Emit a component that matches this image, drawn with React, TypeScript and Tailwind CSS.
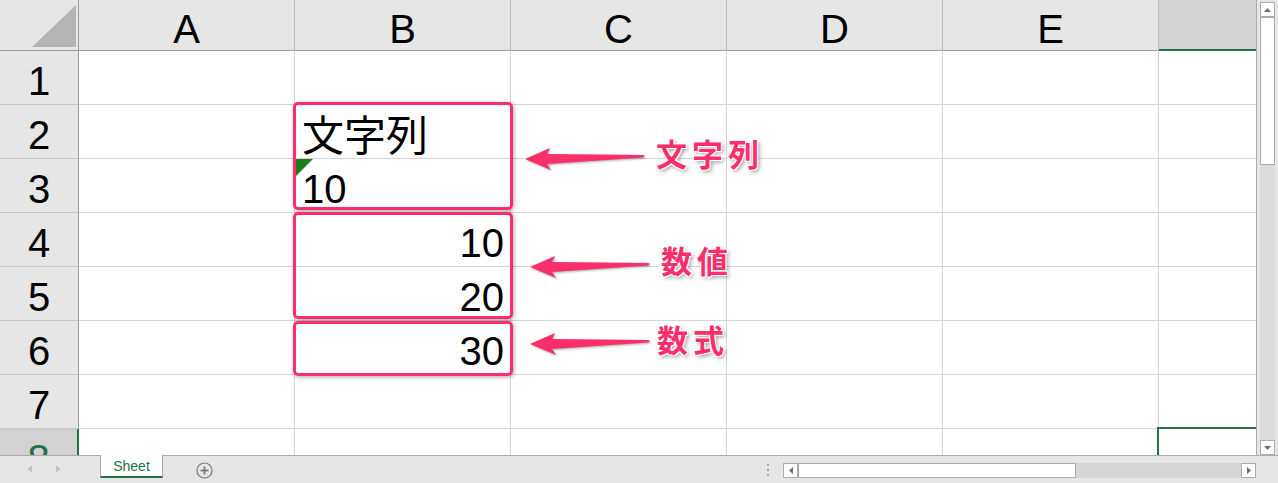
import React from 'react';

const COLS = ['A', 'B', 'C', 'D', 'E'];
const ROWS = [1, 2, 3, 4, 5, 6, 7, 8];
const PINK = '#fa2e6b';

const Arrow: React.FC<{ left: number; top: number }> = ({ left, top }) => (
  <svg
    className="absolute drop-shadow-[1px_1px_1px_rgba(0,0,0,0.35)]"
    style={{ left, top }}
    width="130"
    height="30"
    viewBox="0 0 130 30"
  >
    <polygon
      points="5,15 30,4 27,10 123,11 125,12 123,13.5 27,20 31,26"
      fill={PINK}
    />
  </svg>
);

const Label: React.FC<{ text: string; className: string }> = ({ text, className }) => (
  <div
    className={`absolute font-['Noto_Sans_CJK_JP',sans-serif] font-bold text-[31px] leading-none tracking-[5px] text-[#fa2e6b] [text-shadow:-1px_-1px_0_#fff,1px_-1px_0_#fff,-1px_1px_0_#fff,1px_1px_0_#fff,2px_2px_4px_rgba(0,0,0,0.45)] ${className}`}
  >
    {text}
  </div>
);

function cellContent(row: number, col: string) {
  if (col !== 'B') return null;
  if (row === 2)
    return (
      <span className="pl-[7px] pb-[4px] font-['Noto_Sans_CJK_JP',sans-serif] text-[42px] leading-none">
        文字列
      </span>
    );
  if (row === 3) return <span className="pl-[7px] pb-[3px]">10</span>;
  if (row === 4) return <span className="ml-auto pr-[6px] pb-[3px]">10</span>;
  if (row === 5) return <span className="ml-auto pr-[6px] pb-[3px]">20</span>;
  if (row === 6) return <span className="ml-auto pr-[6px] pb-[3px]">30</span>;
  return null;
}

const GridArea = () => (
  <div className="relative w-[1257px] h-[455px] shrink-0 overflow-hidden border-r border-[#ababab] bg-white">
    {/* column headers */}
    <div className="flex h-[51px]">
      <div className="w-[79px] shrink-0 h-[51px] bg-[#e6e6e6] border-r border-b border-[#9e9e9e] relative">
        <svg className="absolute left-[32px] top-[5px]" width="44" height="42" viewBox="0 0 44 42">
          <polygon points="44,0 44,42 0,42" fill="#b4b4b4" />
        </svg>
      </div>
      {COLS.map((c) => (
        <div
          key={c}
          className="w-[216px] shrink-0 h-[51px] flex items-end justify-center pb-[1px] bg-[#e6e6e6] border-r border-r-[#bcbcbc] border-b border-b-[#9e9e9e] text-[40px] leading-none text-black"
        >
          {c}
        </div>
      ))}
      <div className="flex-1 h-[51px] bg-[#d2d2d2] border-b-2 border-[#217346]" />
    </div>

    {ROWS.map((r) => (
      <div key={r} className="flex h-[54px]">
        <div
          className={`w-[79px] shrink-0 flex items-end justify-center pb-[3px] text-[40px] leading-none border-b border-b-[#c8c8c8] ${
            r === 8
              ? 'bg-[#d2d2d2] text-[#217346] border-r-2 border-r-[#217346]'
              : 'bg-[#e6e6e6] text-black border-r border-r-[#9e9e9e]'
          }`}
        >
          {r}
        </div>
        {COLS.map((c) => (
          <div
            key={c}
            className="relative w-[216px] shrink-0 flex items-end border-r border-b border-[#d4d4d4] text-[40px] leading-none text-black"
          >
            {r === 3 && c === 'B' && (
              <svg className="absolute left-0 top-0" width="18" height="18" viewBox="0 0 18 18">
                <polygon points="0,0 18,0 0,18" fill="#1e7b1e" />
              </svg>
            )}
            {cellContent(r, c)}
          </div>
        ))}
        <div className="flex-1 border-b border-[#d4d4d4]" />
      </div>
    ))}

    {/* selection F8 */}
    <div className="absolute left-[1157px] top-[427px] w-[200px] h-[100px] border-t-2 border-l-2 border-[#217346]" />

    {/* annotations */}
    <div className="absolute left-[293px] top-[102px] w-[220px] h-[108px] rounded-[5px] border-[3px] border-[#fa2e6b] shadow-[1px_1px_4px_rgba(0,0,0,0.35)]" />
    <div className="absolute left-[293px] top-[212px] w-[220px] h-[107px] rounded-[5px] border-[3px] border-[#fa2e6b] shadow-[1px_1px_4px_rgba(0,0,0,0.35)]" />
    <div className="absolute left-[293px] top-[321px] w-[220px] h-[55px] rounded-[5px] border-[3px] border-[#fa2e6b] shadow-[1px_1px_4px_rgba(0,0,0,0.35)]" />

    <Arrow left={520} top={144} />
    <Arrow left={525} top={252} />
    <Arrow left={525} top={329} />

    <Label text="文字列" className="left-[656px] top-[137px]" />
    <Label text="数値" className="left-[661px] top-[244px]" />
    <Label text="数式" className="left-[657px] top-[323px]" />
  </div>
);

const VScroll = () => (
  <div className="flex-1 h-[455px] bg-[#e6e6e6] flex flex-col items-center pt-[2px]">
    <div className="w-[15px] h-[15px] shrink-0 bg-white border border-[#ababab] flex items-center justify-center">
      <svg width="7" height="4" viewBox="0 0 7 4"><polygon points="3.5,0 7,4 0,4" fill="#6f6f6f" /></svg>
    </div>
    <div className="w-[15px] flex-1 bg-[#dcdcdc] flex flex-col">
      <div className="h-[148px] bg-white border border-[#ababab]" />
    </div>
    <div className="w-[15px] h-[15px] shrink-0 bg-white border border-[#ababab] flex items-center justify-center">
      <svg width="7" height="4" viewBox="0 0 7 4"><polygon points="0,0 7,0 3.5,4" fill="#6f6f6f" /></svg>
    </div>
  </div>
);

const BottomBar = () => (
  <div className="h-[28px] border-t border-[#ababab] bg-[#e6e6e6] flex items-start font-['Liberation_Sans',sans-serif]">
    <div className="w-[100px] h-full flex items-center">
      <svg className="ml-[27px] mt-[-1px]" width="5" height="8" viewBox="0 0 5 8"><polygon points="5,0 5,8 0,4" fill="#c4c4c4" /></svg>
      <svg className="ml-[24px] mt-[-1px]" width="5" height="8" viewBox="0 0 5 8"><polygon points="0,0 5,4 0,8" fill="#c4c4c4" /></svg>
    </div>
    <div className="w-[63px] h-[23px] -mt-[1px] pt-[2px] bg-white border-l border-r border-[#ababab] border-b-2 border-b-[#217346] flex items-center justify-center text-[14px] text-[#217346]">
      Sheet
    </div>
    <div className="ml-[33px] mt-[6px]">
      <svg width="17" height="17" viewBox="0 0 17 17">
        <circle cx="8.5" cy="8.5" r="7.5" fill="none" stroke="#7a7a7a" strokeWidth="1.2" />
        <line x1="8.5" y1="4.5" x2="8.5" y2="12.5" stroke="#7a7a7a" strokeWidth="1.8" />
        <line x1="4.5" y1="8.5" x2="12.5" y2="8.5" stroke="#7a7a7a" strokeWidth="1.8" />
      </svg>
    </div>
    <div className="flex-1" />
    <div className="mt-[8px] flex flex-col gap-[3px] mr-[14px]">
      <div className="w-[2px] h-[2px] bg-[#a6a6a6]" />
      <div className="w-[2px] h-[2px] bg-[#a6a6a6]" />
      <div className="w-[2px] h-[2px] bg-[#a6a6a6]" />
    </div>
    <div className="w-[473px] h-[15px] mt-[7px] mr-[22px] flex">
      <div className="w-[15px] h-[15px] bg-white border border-[#ababab] flex items-center justify-center">
        <svg width="4" height="7" viewBox="0 0 4 7"><polygon points="4,0 4,7 0,3.5" fill="#6f6f6f" /></svg>
      </div>
      <div className="w-[278px] h-[15px] bg-white border border-[#ababab]" />
      <div className="flex-1 h-[15px] bg-[#d6d6d6]" />
      <div className="w-[15px] h-[15px] bg-white border border-[#ababab] flex items-center justify-center">
        <svg width="4" height="7" viewBox="0 0 4 7"><polygon points="0,0 4,3.5 0,7" fill="#6f6f6f" /></svg>
      </div>
    </div>
  </div>
);

export default function App() {
  return (
    <div className="w-[1278px] h-[483px] overflow-hidden flex flex-col bg-white font-['Liberation_Sans','Noto_Sans_CJK_JP',sans-serif]">
      <div className="flex h-[455px]">
        <GridArea />
        <VScroll />
      </div>
      <BottomBar />
    </div>
  );
}
